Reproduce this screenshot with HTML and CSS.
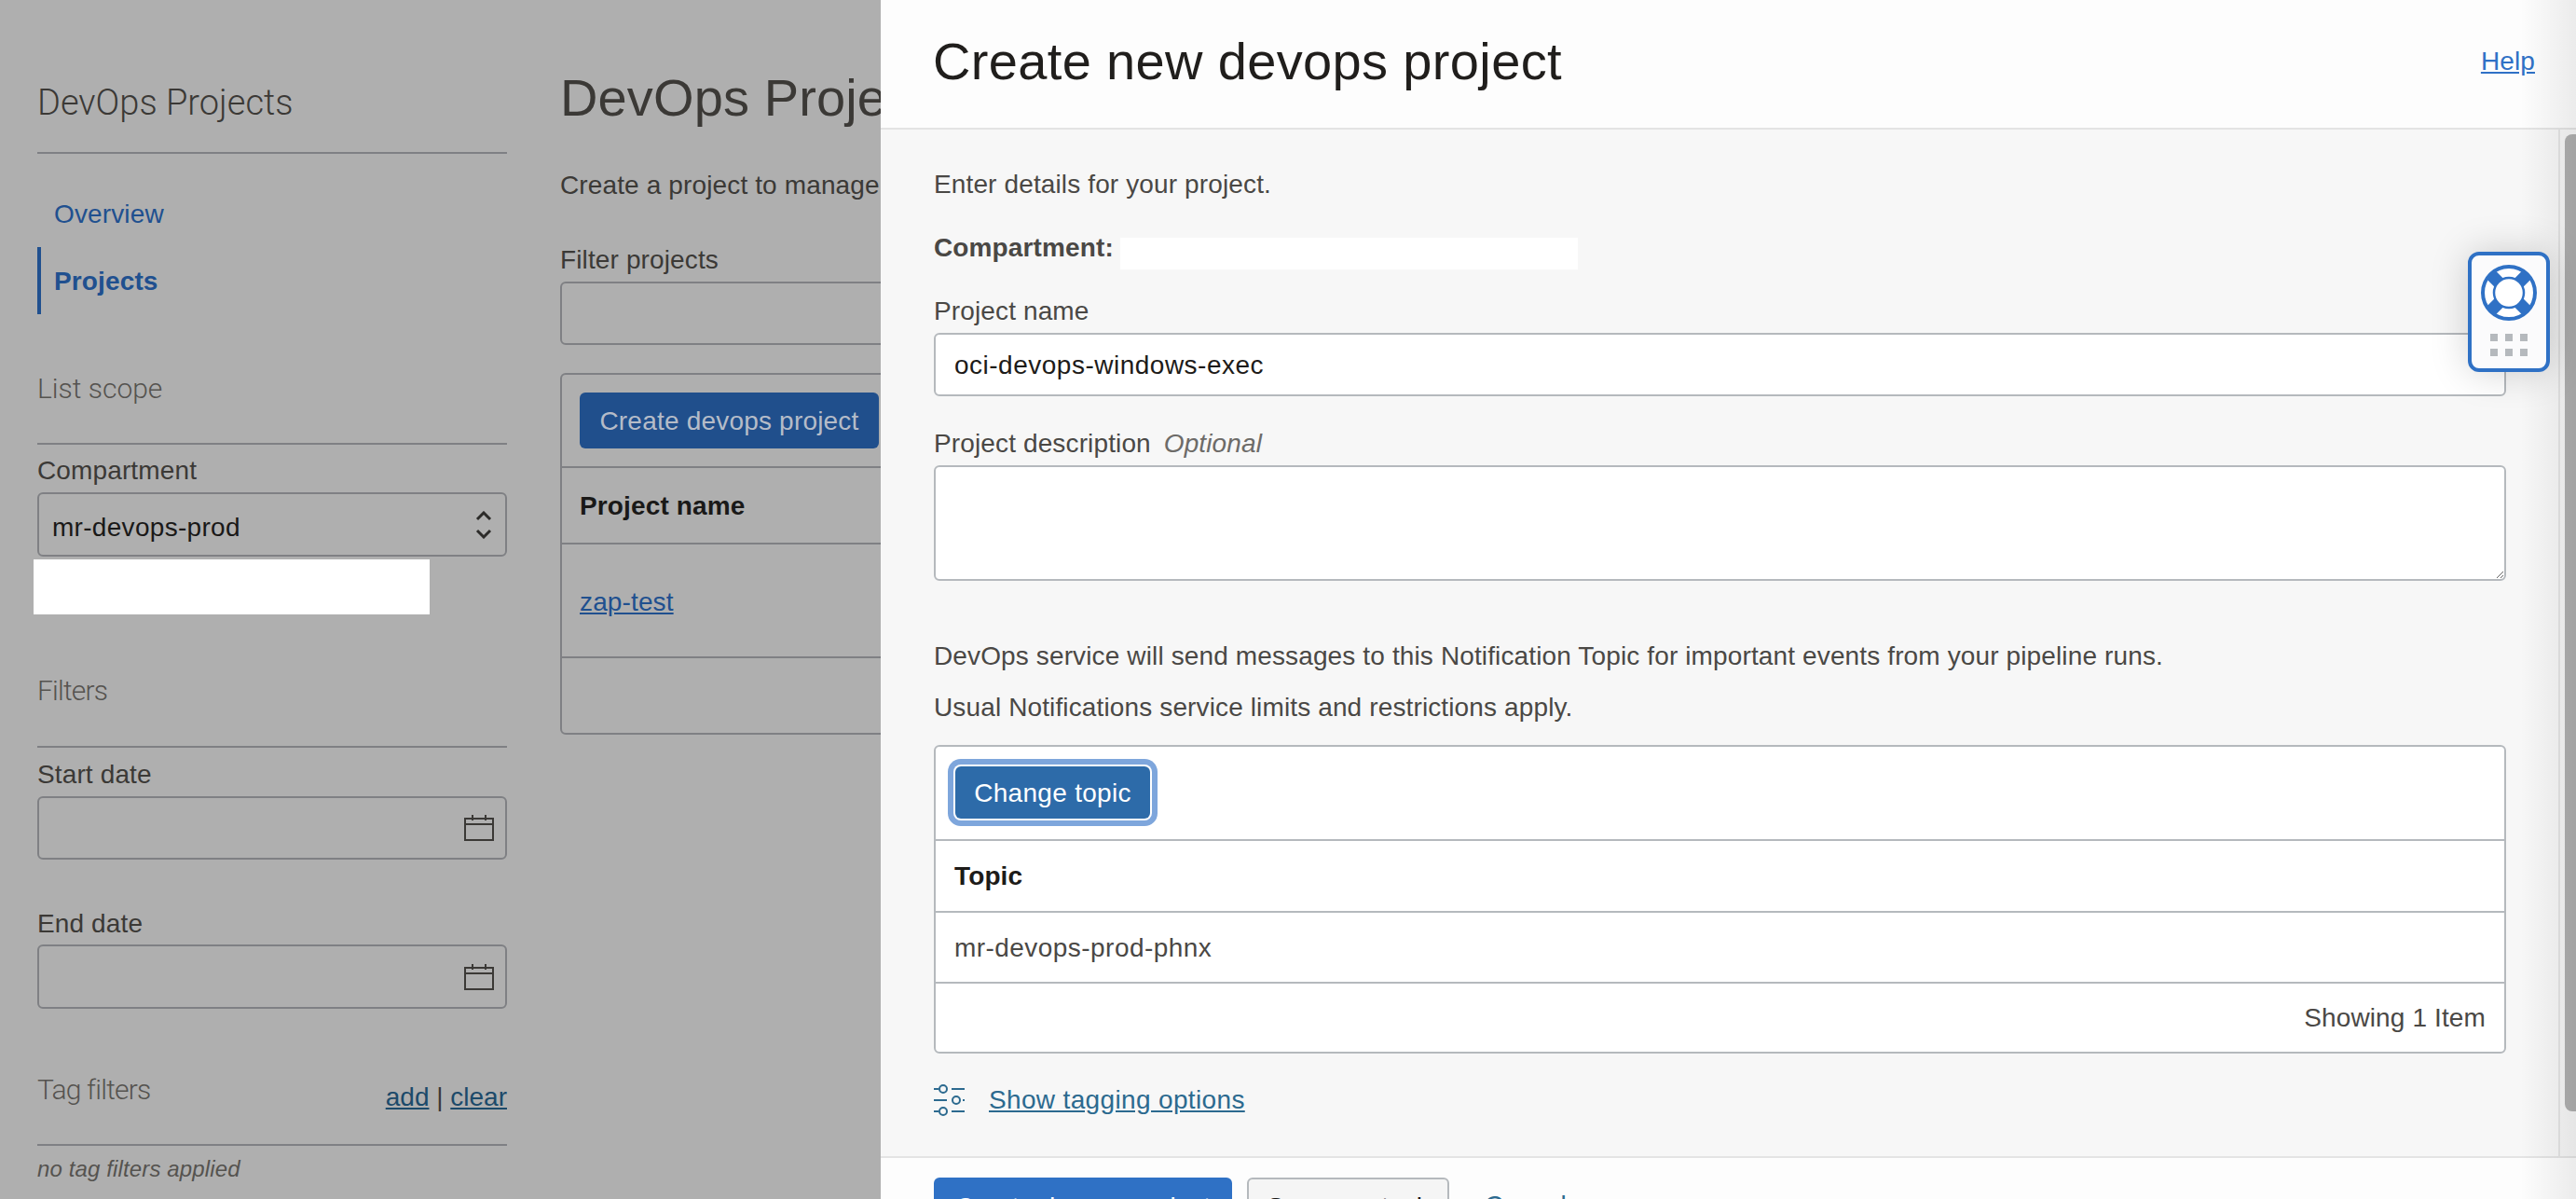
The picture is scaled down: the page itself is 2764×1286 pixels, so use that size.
FILE: index.html
```html
<!DOCTYPE html>
<html lang="en">
    <head>
        <title>Create new devops project</title>
        <link rel="stylesheet" href="styles.css">
    </head>

    <body>
        <div class="achtergrond">
            <div class="zijbalk">
                <h2 class="zij-titel">DevOps Projects</h2>
                <div class="nav">
                    <a class="nav-item">Overview</a>
                    <a class="nav-item nav-actief">Projects</a>
                </div>

                <h3 class="zij-kop scope-kop">List scope</h3>
                <p class="zij-label compartment-label">Compartment</p>
                <div class="veld select-veld">
                    <span>mr-devops-prod</span>
                    <svg class="chevrons" width="18" height="30" viewBox="0 0 18 30"><path d="M2 9l7-7 7 7M2 21l7 7 7-7"/></svg>
                </div>
                <div class="wit-blok"></div>

                <h3 class="zij-kop filter-kop">Filters</h3>
                <p class="zij-label start-label">Start date</p>
                <div class="veld datum-veld">
                    <svg class="kalender" width="32" height="28" viewBox="0 0 32 28"><path d="M1 4h30v23H1zM1 10h30M9 0v6M23 0v6"/></svg>
                </div>
                <p class="zij-label eind-label">End date</p>
                <div class="veld datum-veld eind-veld">
                    <svg class="kalender" width="32" height="28" viewBox="0 0 32 28"><path d="M1 4h30v23H1zM1 10h30M9 0v6M23 0v6"/></svg>
                </div>

                <div class="zij-kop tag-kop">
                    <h3 class="tag-titel">Tag filters</h3>
                    <p class="tag-links"><a>add</a> | <a>clear</a></p>
                </div>
                <p class="geen-tags">no tag filters applied</p>
            </div>

            <div class="hoofd">
                <h1 class="hoofd-titel">DevOps Projects</h1>
                <p class="hoofd-tekst">Create a project to manage your pipelines and code repositories</p>
                <p class="zij-label filter-label">Filter projects</p>
                <div class="veld filter-veld"></div>
                <div class="lijst">
                    <div class="lijst-balk"><button class="knop-donker">Create devops project</button></div>
                    <div class="lijst-kop">Project name</div>
                    <div class="lijst-rij"><a>zap-test</a></div>
                    <div class="lijst-voet"></div>
                </div>
            </div>
        </div>

        <div class="paneel">
            <div class="paneel-kop">
                <h1>Create new devops project</h1>
                <a class="help">Help</a>
            </div>

            <div class="paneel-midden">
                <div class="formulier">
                    <p class="regel intro">Enter details for your project.</p>
                    <div class="compartment-rij">
                        <strong>Compartment:</strong>
                        <div class="wit-strook"></div>
                    </div>
                    <label class="regel naam-label">Project name</label>
                    <input class="invoer" type="text" value="oci-devops-windows-exec">
                    <label class="regel omschrijving-label">Project description <em>Optional</em></label>
                    <textarea class="tekstvak"></textarea>
                    <p class="regel melding-een">DevOps service will send messages to this Notification Topic for important events from your pipeline runs.</p>
                    <p class="regel melding-twee">Usual Notifications service limits and restrictions apply.</p>

                    <div class="topic-tabel">
                        <div class="topic-balk"><button class="knop-focus">Change topic</button></div>
                        <div class="topic-kop">Topic</div>
                        <div class="topic-rij">mr-devops-prod-phnx</div>
                        <div class="topic-voet">Showing 1 Item</div>
                    </div>

                    <div class="tag-opties">
                        <svg class="schuiven" width="33" height="34" viewBox="0 0 33 34">
                            <path d="M0 5h5M19 5h14M0 17h14M31 17h2M0 29h5M19 29h14"/>
                            <circle cx="10" cy="5" r="4"/>
                            <circle cx="24" cy="17" r="4"/>
                            <circle cx="10" cy="29" r="4"/>
                        </svg>
                        <a>Show tagging options</a>
                    </div>
                </div>
                <div class="scrollbalk"><div class="scroll-duim"></div></div>
            </div>

            <div class="paneel-voet">
                <button class="knop-blauw">Create devops project</button>
                <button class="knop-licht">Save as stack</button>
                <a class="annuleer">Cancel</a>
            </div>

            <div class="rand-schaduw"></div>
        </div>

        <div class="hulp-knop">
            <svg class="boei" width="60" height="60" viewBox="0 0 60 60">
                <circle class="boei-ring" cx="30" cy="30" r="28"/>
                <path class="boei-band" d="M10.2 10.2l12 12M49.8 10.2l-12 12M10.2 49.8l12-12M49.8 49.8l-12-12"/>
                <circle class="boei-kern" cx="30" cy="30" r="16"/>
            </svg>
            <div class="stippen">
                <i></i><i></i><i></i><i></i><i></i><i></i>
            </div>
        </div>
    </body>
</html>
```

FILE: styles.css
```css
* {
    box-sizing: border-box;
}

html, body {
    height: 100%;
}

body {
    margin: 0;
    display: flex;
    height: 1286px;
    overflow: hidden;
    font-family: "Liberation Sans", Arial, sans-serif;
    font-size: 28px;
    letter-spacing: .13px;
    background-color: #afafaf;
}

h1, h2, h3, p {
    margin: 0;
    font-weight: normal;
}

a {
    text-decoration: underline;
}

/* linkerkant, gedimd achter het paneel */
.achtergrond {
    width: 945px;
    flex: none;
    display: flex;
    gap: 57px;
    padding-left: 40px;
    overflow: hidden;
    background-color: #afafaf;
    color: #3b3936;
}

.zijbalk {
    width: 504px;
    flex: none;
}

.zij-titel {
    margin-top: 80px;
    padding-bottom: 23px;
    border-bottom: 2px solid #7f8084;
    font-family: Roboto, sans-serif;
    font-weight: 300;
    font-size: 38px;
    letter-spacing: 0;
    line-height: 60px;
}

.nav {
    margin-top: 28px;
}

.nav-item {
    display: block;
    height: 72px;
    line-height: 74px;
    padding-left: 14px;
    border-left: 4px solid transparent;
    color: #20508f;
    text-decoration: none;
}

.nav-actief {
    border-left-color: #20508f;
    font-weight: bold;
}

.zij-kop {
    font-family: Roboto, sans-serif;
    font-weight: 300;
    font-size: 30px;
    letter-spacing: -.8px;
    line-height: 40px;
    padding-bottom: 38px;
    border-bottom: 2px solid #7f8084;
    color: #55534f;
}

.scope-kop {
    margin-top: 60px;
    letter-spacing: 0;
}

.filter-kop {
    margin-top: 62px;
    padding-bottom: 39px;
}

.zij-label {
    height: 32px;
    padding-top: 1px;
    line-height: 32px;
}

.compartment-label {
    margin-top: 11px;
}

.start-label {
    margin-top: 12px;
}

.eind-label {
    margin-top: 52px;
}

.veld {
    height: 68px;
    margin-top: 8px;
    border: 2px solid #7f8084;
    border-radius: 6px;
    display: flex;
    align-items: center;
}

.select-veld {
    height: 69px;
    padding: 6px 14px 0 14px;
    justify-content: space-between;
    color: #1a1918;
    letter-spacing: .3px;
}

.chevrons {
    margin-top: -6px;
}

.chevrons path {
    fill: none;
    stroke: #2c2b29;
    stroke-width: 3;
}

.wit-blok {
    width: 425px;
    height: 59px;
    margin: 3px 0 0 -4px;
    background-color: #fff;
}

.datum-veld {
    justify-content: flex-end;
    padding-right: 12px;
}

.eind-veld {
    height: 69px;
    margin-top: 7px;
}

.kalender path {
    fill: none;
    stroke: #3b3936;
    stroke-width: 2;
}

.tag-kop {
    margin-top: 67px;
    display: flex;
    justify-content: space-between;
}

.tag-titel {
    font: inherit;
}

.tag-links {
    height: 40px;
    padding-top: 12px;
    font-family: "Liberation Sans", Arial, sans-serif;
    font-size: 28px;
    letter-spacing: 0;
    line-height: 32px;
    color: #3b3936;
}

.tag-links a {
    color: #1c4a6a;
}

.geen-tags {
    margin-top: 13px;
    line-height: 24px;
    font-size: 24px;
    font-style: italic;
    color: #55534f;
}

.hoofd {
    width: 1000px;
    flex: none;
}

.hoofd-titel {
    margin-top: 70px;
    font-size: 56px;
    line-height: 70px;
}

.hoofd-tekst {
    margin-top: 42px;
    height: 32px;
    padding-top: 1px;
    line-height: 32px;
    white-space: nowrap;
}

.filter-label {
    margin-top: 48px;
}

.lijst {
    margin-top: 30px;
    border: 2px solid #7f8084;
    border-radius: 6px;
}

.lijst-balk {
    height: 100px;
    padding: 19px 0 0 19px;
    border-bottom: 2px solid #7f8084;
}

.knop-donker {
    height: 60px;
    width: 321px;
    padding: 2px 0 0 0;
    border: 0;
    border-radius: 6px;
    background-color: #204f8c;
    color: #b5bcc8;
    font: inherit;
    letter-spacing: .2px;
}

.lijst-kop {
    height: 82px;
    padding-left: 19px;
    border-bottom: 2px solid #7f8084;
    line-height: 82px;
    font-weight: bold;
    color: #1a1918;
}

.lijst-rij {
    height: 122px;
    padding-left: 19px;
    border-bottom: 2px solid #7f8084;
    line-height: 124px;
    color: #20508f;
}

.lijst-voet {
    height: 80px;
}

/* het paneel */
.paneel {
    position: relative;
    width: 1819px;
    flex: none;
    background-color: #f7f7f7;
    color: #4a4845;
}

.paneel-kop {
    height: 139px;
    padding: 0 44px 6px 56px;
    border-bottom: 2px solid #e4e4e4;
    background-color: #fdfdfd;
    display: flex;
    align-items: center;
    justify-content: space-between;
}

.paneel-kop h1 {
    font-size: 56px;
    letter-spacing: .35px;
    color: #201e1c;
}

.help {
    color: #2f71c6;
}

.paneel-midden {
    height: 1101px;
    display: flex;
}

.formulier {
    width: 1802px;
    flex: none;
    padding: 42px 56px 0 57px;
    border-right: 2px solid #e4e4e4;
}

.regel {
    display: block;
    height: 32px;
    padding-top: 1px;
    line-height: 32px;
}

.compartment-rij {
    height: 34px;
    margin-top: 42px;
    display: flex;
    align-items: flex-start;
    line-height: 22px;
}

.wit-strook {
    width: 491px;
    height: 34px;
    margin-left: 7px;
    background-color: #fff;
}

.naam-label {
    margin-top: 28px;
}

.invoer {
    display: block;
    width: 100%;
    height: 68px;
    margin-top: 8px;
    padding: 2px 20px 0 20px;
    border: 2px solid #b5b9bd;
    border-radius: 6px;
    background-color: #fff;
    color: #1d1b19;
    font: inherit;
    letter-spacing: .5px;
}

.omschrijving-label {
    margin-top: 34px;
}

.omschrijving-label em {
    margin-left: 6px;
    color: #6d6b68;
}

.tekstvak {
    display: block;
    width: 100%;
    height: 124px;
    margin-top: 8px;
    border: 2px solid #b5b9bd;
    border-radius: 6px;
    background-color: #fff;
    resize: vertical;
}

.melding-een {
    margin-top: 64px;
}

.melding-twee {
    margin-top: 23px;
}

.topic-tabel {
    margin-top: 25px;
    border: 2px solid #b5b9bd;
    border-radius: 6px;
    background-color: #fff;
}

.topic-balk {
    height: 101px;
    padding: 21px 0 0 21px;
    border-bottom: 2px solid #b5b9bd;
}

.knop-focus {
    width: 209px;
    height: 56px;
    padding: 1px 0 0 0;
    border: 0;
    border-radius: 6px;
    background-color: #2d6ba9;
    box-shadow: 0 0 0 2px #fff, 0 0 0 8px #7ea6dc;
    color: #fff;
    font: inherit;
    letter-spacing: .3px;
}

.topic-kop, .topic-rij {
    height: 76px;
    padding: 0 20px;
    border-bottom: 2px solid #b5b9bd;
    line-height: 76px;
}

.topic-kop {
    height: 77px;
    font-weight: bold;
    color: #1d1b19;
}

.topic-rij {
    letter-spacing: .45px;
}

.topic-voet {
    height: 73px;
    padding: 0 20px;
    line-height: 74px;
    text-align: right;
}

.tag-opties {
    height: 34px;
    margin-top: 33px;
    display: flex;
    align-items: center;
    gap: 26px;
    color: #2c6a8f;
    letter-spacing: .35px;
}

.schuiven {
    flex: none;
    fill: none;
    stroke: #2c6a8f;
    stroke-width: 2;
}

.scrollbalk {
    flex: 1;
    padding: 5px 0 0 5px;
    overflow: hidden;
}

.scroll-duim {
    height: 1048px;
    margin-right: -8px;
    border-radius: 8px;
    background-color: #b0b0b0;
}

.paneel-voet {
    height: 46px;
    padding: 21px 0 0 57px;
    border-top: 2px solid #e4e4e4;
    background-color: #fdfdfd;
    display: flex;
    align-items: flex-start;
    gap: 16px;
}

.knop-blauw, .knop-licht {
    flex: none;
    height: 64px;
    border-radius: 6px;
    font: inherit;
}

.knop-blauw {
    width: 320px;
    border: 0;
    background-color: #2f71c5;
    color: #fff;
}

.knop-licht {
    width: 217px;
    border: 2px solid #b5b9bd;
    background-color: #f5f5f5;
    color: #161616;
}

.annuleer {
    margin: 14px 0 0 22px;
    color: #2c6a8f;
    text-decoration: none;
}

.rand-schaduw {
    position: absolute;
    top: 0;
    right: 0;
    width: 60px;
    height: 100%;
    background: linear-gradient(to right, rgba(0, 0, 0, 0), rgba(0, 0, 0, .07));
    pointer-events: none;
}

/* zwevende hulpknop */
.hulp-knop {
    position: absolute;
    left: 2648px;
    top: 270px;
    width: 88px;
    height: 129px;
    padding-top: 10px;
    border: 4px solid #2f71c5;
    border-radius: 12px;
    background-color: #fbfbfc;
    box-shadow: 0 0 40px rgba(0, 0, 0, .18);
    display: flex;
    flex-direction: column;
    align-items: center;
}

.boei-ring {
    fill: #fff;
    stroke: #2f71c5;
    stroke-width: 4;
}

.boei-band {
    fill: none;
    stroke: #2f71c5;
    stroke-width: 13;
}

.boei-kern {
    fill: #fff;
    stroke: #2f71c5;
    stroke-width: 2.5;
}

.stippen {
    margin-top: 14px;
    display: grid;
    grid-template-columns: repeat(3, 8px);
    gap: 8px;
}

.stippen i {
    height: 8px;
    background-color: #b5b9bd;
}
```
